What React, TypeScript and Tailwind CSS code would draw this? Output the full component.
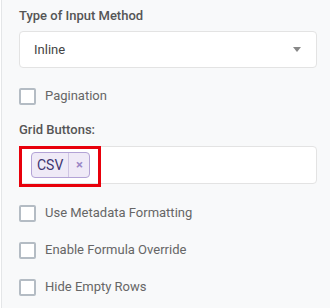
import React from "react";

const checks = ["Use Metadata Formatting", "Enable Formula Override", "Hide Empty Rows"];

function Checkbox({ label }: { label: string }) {
  return (
    <label className="flex items-center gap-[9px] h-[18px]">
      <span className="w-[17px] h-[17px] rounded-[2px] border-2 border-[#b4bcc4] bg-white" />
      <span className="text-[13px] text-[#666]">{label}</span>
    </label>
  );
}

export default function App() {
  return (
    <div
      className="w-[330px] h-[308px] bg-[#f8f9fa] border-l border-[#e4e6e8] ml-[1px] pl-[17px] pr-[14px] pt-[8px] overflow-hidden"
      style={{ fontFamily: "Roboto, 'Liberation Sans', sans-serif" }}
    >
      <div className="text-[13px] font-medium text-[#555] leading-[16px]">Type of Input Method</div>
      <div className="mt-[7px] h-[37px] bg-white border border-[#e3e3e3] rounded-[4px] flex items-center justify-between pl-[14px] pr-[15px]">
        <span className="text-[13px] text-[#444]">Inline</span>
        <svg width="8" height="5" viewBox="0 0 8 5">
          <path d="M0 0h8L4 5z" fill="#888" />
        </svg>
      </div>
      <div className="mt-[19px]">
        <Checkbox label="Pagination" />
      </div>
      <div className="mt-[17px] text-[13px] font-medium text-[#555] leading-[16px]">Grid Buttons:</div>
      <div className="relative mt-[8px] h-[38px] bg-white border border-[#e3e3e3] rounded-[4px] flex items-center pl-[11px]">
        <div className="flex items-center h-[26px] rounded-[4px] border border-[#b3a3d6] bg-[#efeaf7]">
          <span className="pl-[5px] pr-[5px] text-[14px] text-[#3f3570]">CSV</span>
          <span className="h-full border-l border-[#cfc5e4] w-[21px] flex items-center justify-center text-[#9a86c6] text-[13px] font-bold">×</span>
        </div>
        <div className="absolute left-[-1px] top-[-1px] w-[82px] h-[41px] border-[3px] border-[#e8000b]" />
      </div>
      <div className="mt-[20px] flex flex-col gap-[19px]">
        {checks.map((c) => (
          <Checkbox key={c} label={c} />
        ))}
      </div>
    </div>
  );
}
